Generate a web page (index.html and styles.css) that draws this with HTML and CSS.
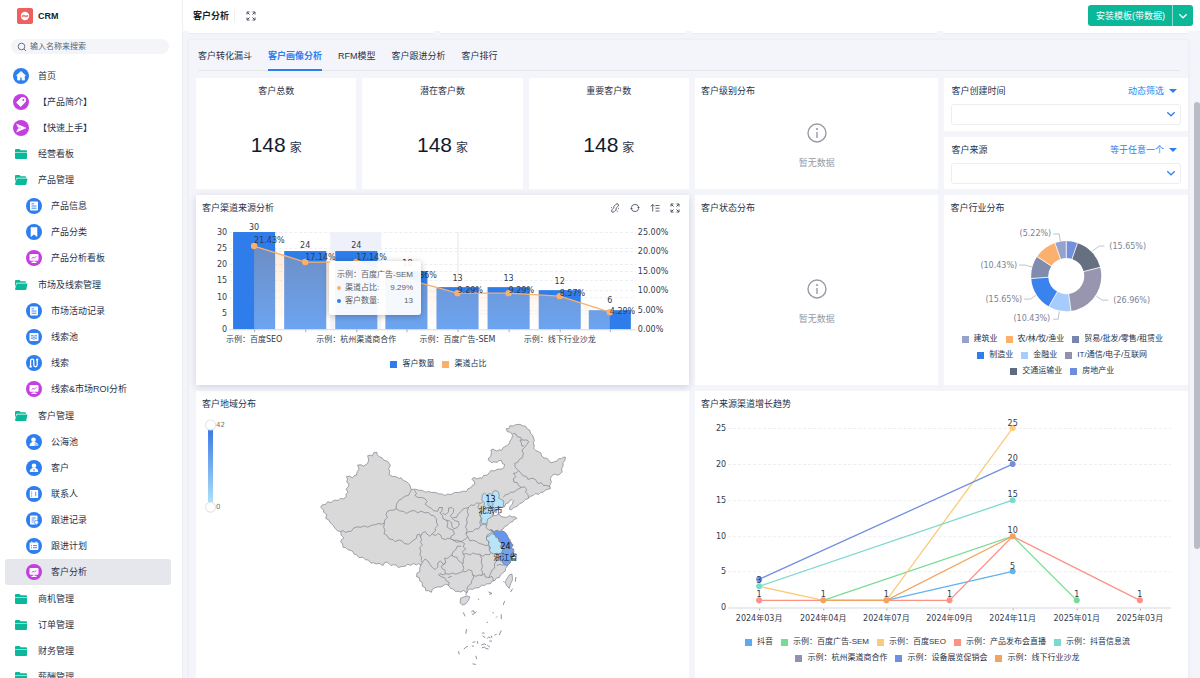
FILE: index.html
```html
<!DOCTYPE html>
<html lang="zh-CN">
<head>
    <meta charset="UTF-8">
    <meta name="viewport" content="width=device-width, initial-scale=1.0">
    <title>CRM - 客户分析</title>
    <link rel="stylesheet" href="styles.css">
</head>
<body>

    <!-- Icon sprite -->
    <svg class="sprite" aria-hidden="true">
        <symbol id="i-home" viewBox="0 0 16 16"><path d="M8 3.400 3.400 7.600h1.100v4.500h2.500V9.200h2v2.900h2.500V7.600h1.100z" fill="#fff" stroke="#fff" stroke-width=".6" stroke-linejoin="round"/></symbol>
        <symbol id="i-tag" viewBox="0 0 16 16"><path d="M8.300 3.800h3.400l.7.7v3.300l-4.700 4.600-4.100-4z" fill="#fff" stroke="#fff" stroke-linejoin="round"/><circle cx="10.300" cy="6" r="1" fill="#c43fe0"/></symbol>
        <symbol id="i-send" viewBox="0 0 16 16"><path d="M3.600 4 13 8l-9.400 4 1.500-3.300L9 8 5.100 7.300z" fill="#fff" stroke="#fff" stroke-width=".5" stroke-linejoin="round"/></symbol>
        <symbol id="i-folder" viewBox="0 0 16 16"><path d="M2 4q0-1 1-1h3.500l1.200 1.200H13q1 0 1 1v1H2z"/><path d="M2 6.800h12V12q0 1-1 1H3q-1 0-1-1z"/></symbol>
        <symbol id="i-folder-open" viewBox="0 0 16 16"><path d="M2 4q0-1 1-1h3.500l1.200 1.200H12q1 0 1 1v.6H3.500L2 10z"/><path d="M3.800 6.500H14.500L13.400 12q-.2 1-1 1H3q-1 0-1-1z"/></symbol>
        <symbol id="i-doc" viewBox="0 0 16 16"><rect x="4" y="3.500" width="8" height="9" rx="1" fill="#fff"/><path d="M5.500 5.800h2.500M5.500 8h5M5.500 10.200h5" stroke="#2d7ff0" stroke-width=".9"/></symbol>
        <symbol id="i-mark" viewBox="0 0 16 16"><path d="M5 3.500h6v9L8 10.200l-3 2.300z" fill="#fff" stroke="#fff" stroke-width=".6" stroke-linejoin="round"/></symbol>
        <symbol id="i-board" viewBox="0 0 16 16"><rect x="3.500" y="4" width="9" height="6.800" rx="1" fill="#fff"/><path d="M5.500 12.300h5M8 10.500v2" stroke="#fff" stroke-width="1.200"/><path d="M5.600 8.600 7.200 7.300l1.200.9 2-2" fill="none" stroke="#c43fe0" stroke-width=".9"/></symbol>
        <symbol id="i-pool" viewBox="0 0 16 16"><rect x="3.500" y="4" width="9" height="8" rx="1" fill="#fff"/><path d="M5 6.700q1-1 2 0t2 0 2 0M5 8.300q1-1 2 0t2 0 2 0M5 9.900q1-1 2 0t2 0 2 0" fill="none" stroke="#2d7ff0" stroke-width=".7"/></symbol>
        <symbol id="i-line" viewBox="0 0 16 16"><path d="M4.600 12V6q0-1.800 1.600-1.800T7.800 6v4q0 1.800 1.700 1.800T11.200 10V4.500" fill="none" stroke="#fff" stroke-width="1.300"/><circle cx="4.600" cy="11.600" r="1.200" fill="#fff"/><circle cx="11.200" cy="4.600" r="1.200" fill="#fff"/></symbol>
        <symbol id="i-user" viewBox="0 0 16 16"><circle cx="8" cy="5.700" r="2.300" fill="#fff"/><path d="M3.800 12q0-3.500 3-3.900h2.400q3 .4 3 3.900z" fill="#fff"/><path d="M8 9v2.500" stroke="#2d7ff0" stroke-width=".9"/></symbol>
        <symbol id="i-sea" viewBox="0 0 16 16"><circle cx="7.500" cy="5.700" r="2.300" fill="#fff"/><path d="M3.600 12q0-3.500 3-3.900h2q3.500.4 3.800 3.900z" fill="#fff"/><path d="M8.500 10q.8-.8 1.600 0t1.600 0M8.500 11.500q.8-.8 1.600 0t1.600 0" fill="none" stroke="#2d7ff0" stroke-width=".7"/></symbol>
        <symbol id="i-contact" viewBox="0 0 16 16"><rect x="3.800" y="4" width="8.400" height="8" rx=".8" fill="#fff"/><path d="M9.700 5.800v4.400M5 6h1.200M5 8h1.200M5 10h1.200" stroke="#2d7ff0" stroke-width=".8"/></symbol>
        <symbol id="i-record" viewBox="0 0 16 16"><rect x="4" y="3.600" width="7.500" height="8.800" rx="1" fill="#fff"/><path d="M5.500 6h4.500M5.500 8h3M5.500 10h2" stroke="#2d7ff0" stroke-width=".8"/><circle cx="10.400" cy="10.400" r="2" fill="#fff" stroke="#2d7ff0" stroke-width=".7"/></symbol>
        <symbol id="i-plan" viewBox="0 0 16 16"><rect x="3.600" y="4.400" width="8.800" height="7.600" rx="1" fill="#fff"/><path d="M5.800 3.500v2M10.200 3.500v2" stroke="#fff"/><path d="M5 7.600h1M7 7.600h4M5 9.700h1M7 9.700h4" stroke="#2d7ff0" stroke-width=".9"/></symbol>
        <symbol id="i-expand" viewBox="0 0 10 10"><path d="M1 3.500V1h2.500M6.500 1H9v2.500M9 6.500V9H6.500M3.500 9H1V6.500M1.200 1.200l2.300 2.300M8.800 1.200 6.500 3.500M8.800 8.800 6.500 6.500M1.200 8.800l2.300-2.300" fill="none" stroke="currentColor"/></symbol>
        <symbol id="i-chevron" viewBox="0 0 10 10"><path d="M1.300 3.300 5 6.800l3.700-3.500" fill="none" stroke="currentColor" stroke-width="1.200"/></symbol>
        <symbol id="i-info" viewBox="0 0 20 20"><circle cx="10" cy="10" r="9" fill="none" stroke="currentColor" stroke-width="1.400"/><path d="M10 9v6" stroke="currentColor" stroke-width="1.400"/><circle cx="10" cy="6" r="1.100" fill="currentColor"/></symbol>
    </svg>

    <!-- Sidebar -->
    <aside class="sidebar">
        <div class="brand">
            <svg class="brand-logo" viewBox="0 0 16 16" aria-hidden="true">
                <rect width="16" height="16" rx="2" fill="#ee5f5f"/>
                <circle cx="8" cy="8" r="4.200" fill="#fff"/>
                <path d="M5 8.600q1.500-1.600 3-.6t3-.6" fill="none" stroke="#f0807c" stroke-width="1.600"/>
            </svg>
            <span>CRM</span>
        </div>
        <label class="search">
            <svg viewBox="0 0 10 10" aria-hidden="true"><circle cx="4.500" cy="4.500" r="3.300" fill="none" stroke="#596175" stroke-width=".9"/><path d="m7 7 2 2" stroke="#596175" stroke-width=".9"/></svg>
            <input type="text" placeholder="输入名称来搜索" aria-label="搜索">
        </label>
        <nav>
            <ul class="menu">
                <li><a href="#"><svg class="icon blue"><use href="#i-home"/></svg>首页</a></li>
                <li><a href="#"><svg class="icon purple"><use href="#i-tag"/></svg>【产品简介】</a></li>
                <li><a href="#"><svg class="icon purple"><use href="#i-send"/></svg>【快速上手】</a></li>
                <li><a href="#"><svg class="icon folder"><use href="#i-folder"/></svg>经营看板</a></li>
                <li>
                    <a href="#"><svg class="icon folder"><use href="#i-folder-open"/></svg>产品管理</a>
                    <ul class="submenu">
                        <li><a href="#"><svg class="icon blue"><use href="#i-doc"/></svg>产品信息</a></li>
                        <li><a href="#"><svg class="icon blue"><use href="#i-mark"/></svg>产品分类</a></li>
                        <li><a href="#"><svg class="icon purple"><use href="#i-board"/></svg>产品分析看板</a></li>
                    </ul>
                </li>
                <li>
                    <a href="#"><svg class="icon folder"><use href="#i-folder-open"/></svg>市场及线索管理</a>
                    <ul class="submenu">
                        <li><a href="#"><svg class="icon blue"><use href="#i-doc"/></svg>市场活动记录</a></li>
                        <li><a href="#"><svg class="icon blue"><use href="#i-pool"/></svg>线索池</a></li>
                        <li><a href="#"><svg class="icon blue"><use href="#i-line"/></svg>线索</a></li>
                        <li><a href="#"><svg class="icon purple"><use href="#i-board"/></svg>线索&amp;市场ROI分析</a></li>
                    </ul>
                </li>
                <li>
                    <a href="#"><svg class="icon folder"><use href="#i-folder-open"/></svg>客户管理</a>
                    <ul class="submenu">
                        <li><a href="#"><svg class="icon blue"><use href="#i-sea"/></svg>公海池</a></li>
                        <li><a href="#"><svg class="icon blue"><use href="#i-user"/></svg>客户</a></li>
                        <li><a href="#"><svg class="icon blue"><use href="#i-contact"/></svg>联系人</a></li>
                        <li><a href="#"><svg class="icon blue"><use href="#i-record"/></svg>跟进记录</a></li>
                        <li><a href="#"><svg class="icon blue"><use href="#i-plan"/></svg>跟进计划</a></li>
                        <li><a href="#" class="active"><svg class="icon purple"><use href="#i-board"/></svg>客户分析</a></li>
                    </ul>
                </li>
                <li><a href="#"><svg class="icon folder"><use href="#i-folder"/></svg>商机管理</a></li>
                <li><a href="#"><svg class="icon folder"><use href="#i-folder"/></svg>订单管理</a></li>
                <li><a href="#"><svg class="icon folder"><use href="#i-folder"/></svg>财务管理</a></li>
                <li><a href="#"><svg class="icon folder"><use href="#i-folder"/></svg>薪酬管理</a></li>
            </ul>
        </nav>
    </aside>

    <div class="main">
        <!-- Top bar -->
        <header class="topbar">
            <h1>客户分析</h1>
            <button class="icon-btn" aria-label="全屏"><svg><use href="#i-expand"/></svg></button>
            <div class="install">
                <button>安装模板(带数据)</button>
                <button class="install-more" aria-label="更多"><svg><use href="#i-chevron"/></svg></button>
            </div>
        </header>

        <div class="content">
            <!-- Bottom edge of the row above -->
            <div class="prev-row"><i></i><i></i><i></i><i></i></div>

            <section class="panel">
                <nav class="tabs">
                    <a href="#">客户转化漏斗</a>
                    <a href="#" class="active">客户画像分析</a>
                    <a href="#">RFM模型</a>
                    <a href="#">客户跟进分析</a>
                    <a href="#">客户排行</a>
                </nav>

                <div class="grid">
                    <!-- Totals -->
                    <div class="card stat"><h2>客户总数</h2><p><b>148</b>家</p></div>
                    <div class="card stat"><h2>潜在客户数</h2><p><b>148</b>家</p></div>
                    <div class="card stat"><h2>重要客户数</h2><p><b>148</b>家</p></div>

                    <div class="card quarter">
                        <h2>客户级别分布</h2>
                        <div class="empty"><svg><use href="#i-info"/></svg><span>暂无数据</span></div>
                    </div>

                    <!-- Filters -->
                    <div class="filters">
                        <div class="card filter">
                            <div class="filter-head"><label for="created">客户创建时间</label><button>动态筛选<i></i></button></div>
                            <div class="select-box"><select id="created"><option></option></select><svg><use href="#i-chevron"/></svg></div>
                        </div>
                        <div class="card filter">
                            <div class="filter-head"><label for="source">客户来源</label><button>等于任意一个<i></i></button></div>
                            <div class="select-box"><select id="source"><option></option></select><svg><use href="#i-chevron"/></svg></div>
                        </div>
                    </div>

                    <!-- Channel source chart -->
                    <div class="card half hovered">
                        <div class="card-head">
                            <h2>客户渠道来源分析</h2>
                            <div class="tools">
                                <button class="icon-btn" aria-label="联动"><svg viewBox="0 0 10 10"><path d="M3.600 5.200 2 6.800Q.9 8.200 2 9q1 .8 2-.2l1.800-1.800q.9-1 .2-2M6.400 4.800 8 3.200Q9.100 1.800 8 1 7 .2 6 1.200L4.200 3q-.9 1-.2 2" fill="none" stroke="currentColor" stroke-width=".9"/><path d="m2 4.800-1-.3M8 5.200l1 .3M6.800 7.500l.6 1.200" stroke="currentColor" stroke-width=".8"/></svg></button>
                                <button class="icon-btn" aria-label="刷新"><svg viewBox="0 0 10 10"><path d="M1.300 4.500A3.800 3.800 0 0 1 8.700 4.200M8.700 5.500A3.800 3.800 0 0 1 1.300 5.800" fill="none" stroke="currentColor" stroke-width=".9"/><path d="M7.200 4h2.600L8.500 5.700zM.2 6h2.600L1.500 4.300z" fill="currentColor"/></svg></button>
                                <button class="icon-btn" aria-label="排序"><svg viewBox="0 0 10 10"><path d="M2.700 8.500v-7M.8 3.400l1.900-2 1.900 2M5.500 2.500H9.500M5.500 5.200H9.500M5.500 8H9.500" fill="none" stroke="currentColor" stroke-width=".9"/></svg></button>
                                <button class="icon-btn" aria-label="放大"><svg><use href="#i-expand"/></svg></button>
                            </div>
                        </div>
                        <svg class="chart" viewBox="0 0 492 135" preserveAspectRatio="xMinYMin">
                            <defs>
                                <linearGradient id="area" x1="0" y1="0" x2="0" y2="1">
                                    <stop offset="0" stop-color="#ffb46c" stop-opacity=".3"/>
                                    <stop offset="1" stop-color="#ffffff" stop-opacity=".3"/>
                                </linearGradient>
                            </defs>
                            <g transform="translate(33 11)">
                                <path class="grid-line" d="M0 .5H406M0 16.500H406M0 32.500H406M0 48.500H406M0 65.500H406M0 81.500H406M0 19.500H406M0 39.500H406M0 58.500H406M0 78.500H406"/>
                                <rect x="101" width="51" height="97" fill="#eef1f9"/>
                                <path d="M228.500 0v97" stroke="#e3e5ea"/>
                                <g fill="#2e7dea">
                                    <rect x="4" y="0" width="42" height="97"/>
                                    <rect x="55" y="19" width="42" height="78"/>
                                    <rect x="106" y="19" width="42" height="78"/>
                                    <rect x="156" y="39" width="42" height="58"/>
                                    <rect x="207" y="55" width="42" height="42"/>
                                    <rect x="258" y="55" width="42" height="42"/>
                                    <rect x="309" y="58" width="42" height="39"/>
                                    <rect x="359" y="78" width="42" height="19"/>
                                </g>
                                <path d="M25 14 76 30h51l50 17 51 14h51l51 3 50 16v17H25z" fill="url(#area)"/>
                                <path d="M0 97.500H406" stroke="#d5d8de"/>
                                <path d="M25.500 97v3M76.500 97v3M127.500 97v3M177.500 97v3M228.500 97v3M279.500 97v3M330.500 97v3M380.500 97v3" stroke="#a9aeb9"/>
                                <path d="M25 14 76 30h51l50 17 51 14h51l51 3 50 16" fill="none" stroke="#fbb06a" stroke-width="1.400"/>
                                <g fill="#fbb06a">
                                    <circle cx="25" cy="14" r="3.200"/><circle cx="76" cy="30" r="3.200"/><circle cx="127" cy="30" r="3.200"/><circle cx="177" cy="47" r="3.200"/>
                                    <circle cx="228" cy="61" r="3.200"/><circle cx="279" cy="61" r="3.200"/><circle cx="330" cy="64" r="3.200"/><circle cx="380" cy="80" r="3.200"/>
                                </g>
                                <g class="mid">
                                    <text x="25" y="-2">30</text><text x="76" y="16">24</text><text x="127" y="16">24</text><text x="178" y="34">18</text>
                                    <text x="228" y="49">13</text><text x="279" y="49">13</text><text x="330" y="52">12</text><text x="380" y="71">6</text>
                                    <text x="25" y="110">示例：百度SEO</text><text x="127" y="110">示例：杭州渠道商合作</text>
                                    <text x="228" y="110">示例：百度广告-SEM</text><text x="330" y="110">示例：线下行业沙龙</text>
                                </g>
                                <text x="25" y="11">21.43%</text><text x="76" y="28">17.14%</text><text x="127" y="28">17.14%</text><text x="177" y="46">12.86%</text>
                                <text x="228" y="61">9.29%</text><text x="279" y="61">9.29%</text><text x="330" y="64">8.57%</text><text x="380" y="82">4.29%</text>
                                <g class="end">
                                    <text x="-2" y="3">30</text><text x="-2" y="19">25</text><text x="-2" y="35">20</text><text x="-2" y="51">15</text>
                                    <text x="-2" y="68">10</text><text x="-2" y="84">5</text><text x="-2" y="100">0</text>
                                </g>
                                <text x="408" y="3">25.00%</text><text x="408" y="22">20.00%</text><text x="408" y="42">15.00%</text>
                                <text x="408" y="61">10.00%</text><text x="408" y="81">5.00%</text><text x="408" y="100">0.00%</text>
                            </g>
                        </svg>
                        <div class="legend">
                            <div><span><i class="c-bar"></i>客户数量</span><span><i class="c-rate"></i>渠道占比</span></div>
                        </div>
                        <div class="tooltip">
                            <div>示例：百度广告-SEM</div>
                            <dl><dt><i class="c-rate"></i>渠道占比:</dt><dd>9.29%</dd></dl>
                            <dl><dt><i class="c-bar"></i>客户数量:</dt><dd>13</dd></dl>
                        </div>
                    </div>

                    <div class="card quarter">
                        <h2>客户状态分布</h2>
                        <div class="empty"><svg><use href="#i-info"/></svg><span>暂无数据</span></div>
                    </div>

                    <!-- Industry pie -->
                    <div class="card quarter">
                        <h2>客户行业分布</h2>
                        <svg class="chart muted" viewBox="0 0 243 110" preserveAspectRatio="xMidYMin">
                            <g transform="translate(122 55)">
                                <g class="ring" transform="rotate(-90)">
                                    <circle r="26.500" pathLength="100" stroke="#7191df" stroke-dasharray="5.220 94.780"/>
                                    <circle r="26.500" pathLength="100" stroke="#667080" stroke-dasharray="15.650 84.350" stroke-dashoffset="-5.220"/>
                                    <circle r="26.500" pathLength="100" stroke="#9896ae" stroke-dasharray="26.960 73.040" stroke-dashoffset="-20.870"/>
                                    <circle r="26.500" pathLength="100" stroke="#a6cbfc" stroke-dasharray="10.430 89.570" stroke-dashoffset="-47.830"/>
                                    <circle r="26.500" pathLength="100" stroke="#3a82ec" stroke-dasharray="15.650 84.350" stroke-dashoffset="-58.260"/>
                                    <circle r="26.500" pathLength="100" stroke="#7f8cae" stroke-dasharray="10.430 89.570" stroke-dashoffset="-73.910"/>
                                    <circle r="26.500" pathLength="100" stroke="#fbb06d" stroke-dasharray="10.430 89.570" stroke-dashoffset="-84.340"/>
                                    <circle r="26.500" pathLength="100" stroke="#95a2cc" stroke-dasharray="5.220 94.780" stroke-dashoffset="-94.770"/>
                                </g>
                                <path d="M0-36v20M11.600-34 5-15M34.900-9 15-4M4.900 35.700 2 15M-17.900 31.300-8 14M-36 2.500-16 1M-30-20-13-9M-11.600-34-5-15" stroke="#fff" stroke-width=".8"/>
                                <path d="M-6-35-7-42h-6M26-25l7-5h5M30 20l6 4h6M-7 35-8 43h-5M-30 19l-6 4h-6M-34-9l-7-2h-6" fill="none" stroke="#a3a9b6" stroke-width=".7"/>
                                <g class="end"><text x="-15" y="-40">(5.22%)</text><text x="-49" y="-8">(10.43%)</text><text x="-44" y="26">(15.65%)</text><text x="-16" y="45">(10.43%)</text></g>
                                <text x="43" y="-27">(15.65%)</text><text x="47" y="27">(26.96%)</text>
                            </g>
                        </svg>
                        <div class="legend">
                            <div><span><i class="p-build"></i>建筑业</span><span><i class="p-farm"></i>农/林/牧/渔业</span><span><i class="p-trade"></i>贸易/批发/零售/租赁业</span></div>
                            <div><span><i class="c-bar"></i>制造业</span><span><i class="p-bank"></i>金融业</span><span><i class="p-it"></i>IT/通信/电子/互联网</span></div>
                            <div><span><i class="p-traffic"></i>交通运输业</span><span><i class="p-house"></i>房地产业</span></div>
                        </div>
                    </div>

                    <!-- Region map -->
                    <div class="card half">
                        <h2>客户地域分布</h2>
                        <svg class="chart" viewBox="0 0 492 290" preserveAspectRatio="xMinYMin">
                            <defs>
                                <linearGradient id="range" x1="0" y1="0" x2="0" y2="1"><stop offset="0" stop-color="#3474e6"/><stop offset="1" stop-color="#b4e6f8"/></linearGradient>
                            </defs>
                            <rect x="12" y="8" width="5" height="82" fill="url(#range)"/>
                            <g fill="#fff" stroke="#dfe3ea"><circle cx="14.500" cy="8" r="5"/><circle cx="14.500" cy="90" r="5"/></g>
                            <g class="range-text"><text x="20" y="10">42</text><text x="20" y="92">0</text></g>
                            <g transform="translate(114 -7) scale(.3333)" stroke="#777b8a" stroke-width="2" stroke-linejoin="round">
                                <path fill="#d9d9d9" d="M31 291 36 284 46 283 52 275 62 277 72 270 84 271 90 265 100 266 108 260 107 252 113 246 107 237 114 230 116 222 109 216 112 207 108 200 118 198 126 203 134 195 138 196 141 184 146 177 142 165 152 164 160 168 172 160 175 150 172 137 180 135 186 138 190 128 200 127 200 134 207 140 215 143 220 150 232 154 240 166 235 175 238 184 236 193 246 199 256 199 266 205 272 203 280 212 288 214 298 224 302 238 314 237 325 240 336 241 345 246 354 244 364 247 376 247 384 251 396 252 402 256 412 252 422 253 432 247 446 247 458 243 468 244 472 236 482 232 486 225 493 222 491 213 484 208 489 202 500 206 509 203 514 205 519 196 530 195 536 188 540 182 552 182 562 177 574 177 580 172 582 163 576 161 572 151 564 152 560 157 550 155 544 158 533 150 534 144 540 140 543 128 541 120 547 117 558 123 566 119 573 121 578 112 588 107 596 101 598 93 603 86 606 76 600 67 590 65 587 56 595 56 598 47 608 48 615 44 628 43 636 47 645 49 650 57 657 60 660 70 667 78 671 92 668 98 671 108 669 114 676 122 684 125 690 128 693 137 700 144 708 144 714 150 720 158 728 156 738 153 744 146 752 146 756 142 764 141 763 150 757 158 757 168 753 174 754 186 748 192 742 195 730 192 722 199 719 206 722 216 717 226 719 236 712 237 704 240 698 246 690 247 684 253 674 250 668 256 658 259 652 266 644 268 636 277 628 280 620 288 610 292 602 299 596 297 599 288 605 282 608 272 604 268 597 272 594 278 586 280 582 290 574 292 568 290 562 298 554 300 548 309 548 316 556 316 566 311 570 318 580 321 590 321 596 316 604 320 614 320 619 325 610 328 607 334 598 337 590 346 582 349 578 356 570 360 580 364 586 369 590 380 598 388 600 397 608 405 600 410 594 410 602 415 610 417 606 424 611 430 604 434 605 444 598 448 599 457 592 462 590 468 585 474 584 482 576 488 570 494 566 502 558 503 552 511 544 513 540 520 528 521 522 526 514 524 506 532 494 533 486 537 476 536 472 541 470 547 464 545 460 540 450 545 442 543 434 543 428 536 420 534 414 525 404 521 398 527 390 530 380 530 372 533 365 538 363 546 354 541 346 541 344 532 336 528 335 516 328 512 326 502 318 499 320 488 328 484 328 472 332 464 324 460 318 464 310 460 300 465 292 462 284 468 272 469 264 472 258 465 248 463 242 466 236 460 230 455 222 458 218 466 206 459 198 461 188 457 182 459 174 449 166 449 158 441 146 442 138 433 132 432 126 422 112 418 106 412 98 411 97 400 91 396 94 388 101 383 92 374 92 364 82 362 74 354 68 344 60 338 56 330 46 324 50 314 40 306 40 300z"/>
                                <g fill="none">
                                    <path d="M92 364 98 361 106 367 116 363 122 364 130 354 140 350 152 351 162 347 172 351 184 345 196 343 206 340 214 342 222 338 223 330 231 322 227 312 231 304 240 300 250 300 257 296 258 282 266 270 274 266 284 258 294 256 299 246 303 238"/>
                                    <path d="M222 338 220 352 224 360 221 370 230 376 236 386 248 388 254 394 266 389 276 393 282 400 294 402 302 396 310 390 318 384 320 374 328 372 330 380"/>
                                    <path d="M257 296 268 302 280 304 288 310 300 303 312 301 322 308 332 303 344 308 354 307 360 314 370 317 378 326 378 336 382 346 374 354 375 362 366 370 358 378 350 372 344 364 336 368 330 380 334 388 330 396 336 404 328 412 331 424 328 434 334 440 332 450 336 456 330 466"/>
                                    <path d="M312 240 318 250 314 256 322 262 334 262 344 266 350 274 344 282 354 290 362 294 370 302 382 303 386 292 396 292 394 304 388 308 396 316 398 326 408 330 412 340 409 350 418 356 428 360 432 372 422 378 420 386"/>
                                    <path d="M366 372 376 376 382 370 390 374 394 384 404 388 412 384 420 386 430 390 440 390 452 394"/>
                                    <path d="M396 310 406 313 414 305 414 294 424 292 430 298 428 308 420 316 426 326 434 332 444 334 446 344 440 352 430 356 424 348 424 338 416 332 408 330"/>
                                    <path d="M428 322 438 322 442 312 452 304 458 296 466 294 474 292 470 304 474 314 468 326 470 338 465 350 470 360 466 372 472 380 462 388 452 394 438 396 426 388"/>
                                    <path d="M474 292 482 284 490 286 498 278 510 280 518 274M506 282 502 292 510 302 507 314 512 324 508 336 510 346 504 356 494 356 486 364 476 364 467 370"/>
                                    <path d="M510 346 520 342 528 344M530 340 526 352 536 360 546 360M546 362 538 370 530 374 528 384 534 394 536 404 526 406 516 402 506 400 498 394 486 390 478 392 472 380"/>
                                    <path d="M452 394 462 400 458 410 466 416 456 424 458 432 468 430 478 434 488 428 498 432 508 432 516 438 526 432 536 434 542 426 536 416 536 404"/>
                                    <path d="M452 408 440 408 436 418 428 424 424 434 430 440 438 440 442 448 450 456 458 460 458 448 462 438 458 432"/>
                                    <path d="M336 456 344 446 352 452 358 462 366 472 374 478 382 470 382 458 390 452 398 462 406 456 402 444 412 444 420 436 426 436"/>
                                    <path d="M406 458 398 464 392 468 396 476 404 480 404 490 400 494 388 490 384 494 394 500 402 502 408 512 416 516 414 526"/>
                                    <path d="M404 490 416 492 426 488 436 492 446 488 456 484 460 474 456 462M412 502 424 498M458 484 466 484 474 478 484 482 486 492 490 500 484 510 482 520 472 528 468 540"/>
                                    <path d="M486 494 496 498 506 494 514 496 516 486 512 478 516 468 512 456 514 446 508 434M516 494 522 490 524 500 536 502 544 498 550 512M536 500 540 490 544 480 552 474 552 460 558 452 554 444 558 436M558 466 568 462 578 466"/>
                                    <path d="M578 262 584 254 594 252 600 246 610 246 620 238 632 232 642 230 648 238 645 246 652 254 654 264"/>
                                    <path d="M632 232 624 226 620 218 610 216 608 206 616 200 608 190 618 188 624 182 614 172 612 160 622 156 626 148 636 142 638 130 634 120 642 112 648 104 654 96 650 90 640 90 628 90 632 98 634 108 640 108M634 90 630 82 620 80 616 72 606 70"/>
                                    <path d="M624 182 632 190 636 196 648 200 652 208 664 204 674 208 682 220 692 218 698 226 708 226 718 230"/>
                                </g>
                                <path fill="#b9e4f8" d="M515 254 522 249 528 254 538 250 544 254 548 244 556 241 564 246 566 256 564 264 572 268 580 272 578 282 580 288 572 292 568 290 562 298 554 300 548 309 546 318 536 324 530 328 530 338 522 341 512 338 514 326 510 318 513 308 522 300 530 294 520 288 522 278 514 270z"/>
                                <path fill="#9dd6f4" d="M532 276 542 274 548 280 546 290 554 296 550 306 542 300 542 290 532 286z"/>
                                <path fill="#b9e4f8" d="M542 370 538 376 528 380 528 390 536 394 534 404 540 412 536 420 542 428 552 432 566 432 574 428 578 416 568 410 574 400 566 394 564 384 556 382 554 374z"/>
                                <path fill="#6596f1" d="M540 358 550 364 560 360 568 364 580 364 590 374 594 386 600 394 606 404 604 412 590 414 580 410 572 412 574 400 566 394 564 384 554 376z"/>
                                <path fill="#70a4f2" d="M578 416 590 413 602 415 610 418 606 426 612 432 604 440 600 450 599 458 590 466 580 464 574 454 568 446 570 434z"/>
                                <path fill="#d9d9d9" d="M450 564 460 560 470 557 478 560 474 570 466 580 456 584 449 578zM468 544 466 556M604 491 596 494 588 506 584 516 588 526 596 534 600 520 606 508z"/>
                                <path fill="none" stroke-width="2.500" d="M616 500l-2 14M606 535l-6 10M582 572l-4 12M458 606l6 12M572 612v14M468 656l-2 14M572 660l-6 14M444 722l2 10M496 736l2 10M486 760l10 2M482 606l6-6 4 8 6-4M484 612l8-2M530 634v4M534 545l10 4M536 552l8-2M514 668l8 0M516 676l8 6M530 684l4-4 6 2M536 692l8 0M552 674l6-2M486 696l8-2M484 706l6 2M500 692l2 8M512 704l10-4 4 4M514 712l8-2 4 4 8 2M530 704l8 6M460 716l6-6 6-2M546 606l4 2M556 622l4-4M502 566l4 2M542 676l2 6M604 428l8-4M612 436l6 4M578 514l4 2"/>
                            </g>
                            <g class="mid map-text"><text x="294" y="85">13</text><text x="294" y="96">北京市</text><text x="309" y="132">24</text><text x="309" y="143">浙江省</text></g>
                        </svg>
                    </div>

                    <!-- Trend chart -->
                    <div class="card half">
                        <h2>客户来源渠道增长趋势</h2>
                        <svg class="chart" viewBox="0 0 492 217" preserveAspectRatio="xMinYMin">
                            <g transform="translate(33 11)">
                                <path class="grid-line" d="M0 .5H442M0 36.500H442M0 72.500H442M0 108.500H442M0 143.500H442"/>
                                <path d="M0 179.500H442" stroke="#d5d8de"/>
                                <path d="M31.500 180v2M95.500 180v2M158.500 180v2M221.500 180v2M284.500 180v2M348.500 180v2M411.500 180v2" stroke="#a9aeb9"/>
                                <g fill="none" stroke-width="1.300">
                                    <path stroke="#62b2f0" d="M158 172 284 143"/>
                                    <path stroke="#76dc94" d="M95 172 284 108l64 64"/>
                                    <path stroke="#facb79" d="M31 158l64 14h63L284 0"/>
                                    <path stroke="#fc9186" d="M31 172h190l63-64 127 64"/>
                                    <path stroke="#7cd9d0" d="M31 158 284 72"/>
                                    <path stroke="#718fe0" d="M31 151 284 36"/>
                                    <path stroke="#f1a35f" d="M95 172h63l126-64"/>
                                </g>
                                <circle cx="284" cy="143" r="3" fill="#62b2f0"/>
                                <circle cx="348" cy="172" r="3" fill="#76dc94"/>
                                <circle cx="284" cy="0" r="3" fill="#facb79"/>
                                <g fill="#fc9186"><circle cx="31" cy="172" r="3"/><circle cx="221" cy="172" r="3"/><circle cx="411" cy="172" r="3"/></g>
                                <g fill="#718fe0"><circle cx="31" cy="151" r="3"/><circle cx="284" cy="36" r="3"/></g>
                                <g fill="#7cd9d0"><circle cx="31" cy="158" r="3"/><circle cx="284" cy="72" r="3"/></g>
                                <g fill="#f1a35f"><circle cx="95" cy="172" r="3"/><circle cx="158" cy="172" r="3"/><circle cx="284" cy="108" r="3"/></g>
                                <g class="mid">
                                    <text x="31" y="155">3</text><text x="31" y="169">1</text><text x="95" y="169">1</text><text x="158" y="169">1</text><text x="221" y="169">1</text>
                                    <text x="284" y="-2">25</text><text x="284" y="33">20</text><text x="284" y="69">15</text><text x="284" y="105">10</text><text x="284" y="141">5</text>
                                    <text x="348" y="169">1</text><text x="411" y="169">1</text>
                                    <text x="31" y="193">2024年03月</text><text x="95" y="193">2024年04月</text><text x="158" y="193">2024年07月</text><text x="221" y="193">2024年09月</text>
                                    <text x="284" y="193">2024年11月</text><text x="348" y="193">2025年01月</text><text x="411" y="193">2025年03月</text>
                                </g>
                                <g class="end"><text x="-2" y="3">25</text><text x="-2" y="39">20</text><text x="-2" y="75">15</text><text x="-2" y="111">10</text><text x="-2" y="146">5</text><text x="-2" y="182">0</text></g>
                            </g>
                        </svg>
                        <div class="legend">
                            <div><span><i class="t-douyin"></i>抖音</span><span><i class="t-sem"></i>示例：百度广告-SEM</span><span><i class="t-seo"></i>示例：百度SEO</span><span><i class="t-live"></i>示例：产品发布会直播</span><span><i class="t-feed"></i>示例：抖音信息流</span></div>
                            <div><span><i class="p-it"></i>示例：杭州渠道商合作</span><span><i class="t-expo"></i>示例：设备展览促销会</span><span><i class="t-salon"></i>示例：线下行业沙龙</span></div>
                        </div>
                    </div>
                </div>
            </section>
            <div class="scroll-thumb"></div>
        </div>
    </div>

</body>
</html>
```
FILE: styles.css
```css
* {
    margin: 0;
    padding: 0;
    box-sizing: border-box;
}

body {
    display: flex;
    height: 100vh;
    overflow: hidden;
    font: 9px/12px "Liberation Sans", "Noto Sans CJK SC", sans-serif;
    color: #27334a;
    background: #f4f5fa;
}

ul {
    list-style: none;
}

a {
    color: inherit;
    text-decoration: none;
}

button,
input,
select {
    font: inherit;
    color: inherit;
    border: 0;
    background: none;
}

button {
    cursor: pointer;
}

.sprite {
    display: none;
}

/* Sidebar */
.sidebar {
    flex: 0 0 183px;
    background: #fff;
    border-right: 1px solid #eceef3;
    overflow: hidden;
}

.brand {
    display: flex;
    align-items: center;
    gap: 5px;
    height: 32px;
    padding-left: 17px;
    font-weight: bold;
    color: #141e31;
}

.brand-logo {
    width: 16px;
    height: 16px;
}

.search {
    display: flex;
    align-items: center;
    gap: 3px;
    height: 15px;
    margin: 7px 13px 9px 11px;
    padding-left: 6px;
    border-radius: 8px;
    background: #f3f5f8;
}

.search svg {
    width: 10px;
    height: 10px;
}

.search input {
    flex: 1;
    min-width: 0;
    font-size: 8px;
    outline: none;
}

.search input::placeholder {
    color: #596175;
}

.menu a {
    display: flex;
    align-items: center;
    gap: 9px;
    height: 26px;
    margin: 0 11px 0 5px;
    padding-left: 8px;
    border-radius: 3px;
}

.submenu {
    padding-bottom: 1px;
}

.submenu a {
    padding-left: 21px;
}

.menu a.active {
    background: #e6e7ed;
}

.icon {
    width: 16px;
    height: 16px;
    border-radius: 50%;
}

.blue {
    background: #2d7ff0;
}

.purple {
    background: #c43fe0;
}

.folder {
    border-radius: 0;
    fill: #0bb89a;
}

/* Top bar */
.main {
    flex: 1;
    min-width: 0;
    display: flex;
    flex-direction: column;
}

.topbar {
    display: flex;
    align-items: center;
    height: 31px;
    padding: 0 7px 0 10px;
    background: #fff;
}

.topbar h1 {
    padding-right: 5px;
    margin-right: 11px;
    border-right: 1px solid #edeff3;
    font-size: 9px;
    color: #141e31;
}

.icon-btn {
    display: flex;
    color: #4b5366;
}

.icon-btn svg {
    width: 10px;
    height: 10px;
}

.install {
    display: flex;
    height: 21px;
    margin-left: auto;
    border-radius: 3px;
    overflow: hidden;
    color: #fff;
}

.install button {
    padding: 0 7px 0 8px;
    background: #0ab899;
}

.install .install-more {
    display: flex;
    align-items: center;
    padding: 0 5px;
    border-left: 1px solid #8adccd;
}

.install-more svg {
    width: 10px;
    height: 10px;
}

/* Content */
.content {
    position: relative;
    flex: 1;
    min-height: 0;
    padding: 0 12px 0 6px;
    overflow: hidden;
}

.prev-row {
    display: grid;
    grid-template-columns: repeat(4, 1fr);
    gap: 6px;
    height: 2px;
    margin-bottom: 7px;
}

.prev-row i {
    background: #fff;
    box-shadow: 0 1px 2px #e6e7f0;
}

.panel {
    padding-left: 7px;
    box-shadow: 0 0 4px #e6e7f0;
}

.tabs {
    display: flex;
    gap: 16px;
    height: 31px;
    margin: 0 8px 7px 2px;
    border-bottom: 1px solid #e4e6ec;
}

.tabs a {
    height: 31px;
    line-height: 32px;
}

.tabs .active {
    color: #2d7ff0;
    font-weight: bold;
    border-bottom: 2px solid #2d7ff0;
}

.grid {
    display: grid;
    grid-template-columns: repeat(24, 1fr);
    grid-template-rows: 111px 190px auto;
    gap: 6px;
}

.card {
    position: relative;
    display: flex;
    flex-direction: column;
    background: #fff;
}

.card h2 {
    padding: 0 6px;
    font-size: 9px;
    font-weight: normal;
    line-height: 26px;
}

.quarter,
.filters {
    grid-column: span 6;
}

.half {
    grid-column: span 12;
}

.hovered {
    z-index: 1;
    box-shadow: 0 2px 7px #cfd0e0;
}

.card-head,
.tools {
    display: flex;
    align-items: center;
}

.tools {
    gap: 10px;
    margin-left: auto;
    padding-right: 9px;
}

/* Totals */
.stat {
    grid-column: span 4;
    text-align: center;
}

.stat p {
    margin: auto;
    font-size: 12px;
    line-height: 28px;
}

.stat b {
    margin-right: 4px;
    font-size: 21px;
    font-weight: normal;
    color: #111b2e;
}

.empty {
    flex: 1;
    display: flex;
    flex-direction: column;
    align-items: center;
    justify-content: center;
    gap: 14px;
    padding-bottom: 2px;
    color: #989ba7;
}

.empty svg {
    width: 20px;
    height: 20px;
}

/* Filters */
.filters {
    display: flex;
    flex-direction: column;
    gap: 6px;
}

.filter {
    flex: 1;
    padding: 0 7px;
}

.filter-head {
    display: flex;
    align-items: center;
    justify-content: space-between;
    height: 26px;
}

.filter-head button {
    display: flex;
    align-items: center;
    gap: 5px;
    padding-right: 4px;
    color: #2d7ff0;
}

.filter-head i {
    border: 4px solid transparent;
    border-top-color: #2d7ff0;
    border-bottom: 0;
}

.select-box {
    position: relative;
}

.select-box select {
    display: block;
    width: 100%;
    height: 21px;
    border: 1px solid #eceef2;
    border-radius: 3px;
    appearance: none;
}

.select-box svg {
    position: absolute;
    right: 5px;
    top: 5px;
    width: 10px;
    height: 10px;
    color: #2d7ff0;
    pointer-events: none;
}

/* Charts */
.chart {
    display: block;
    width: 100%;
    font: 8px "DejaVu Sans", "Noto Sans CJK SC", sans-serif;
    fill: #333b4e;
}

.muted {
    fill: #7c8292;
}

.mid {
    text-anchor: middle;
}

.end {
    text-anchor: end;
}

.grid-line {
    stroke: #eceef2;
    stroke-dasharray: 3 2;
}

.ring circle {
    fill: none;
    stroke-width: 17px;
}

.range-text {
    font-size: 7px;
    fill: #6b7180;
}

.map-text {
    fill: #111;
}

.legend {
    font-size: 8px;
    line-height: 16px;
    padding-right: 8px;
}

.legend div {
    display: flex;
    justify-content: center;
    gap: 8px;
}

.legend span {
    display: flex;
    align-items: center;
    gap: 5px;
    white-space: nowrap;
}

.legend i {
    width: 7px;
    height: 7px;
}

.tooltip {
    position: absolute;
    left: 133px;
    top: 66px;
    width: 92px;
    padding: 7px 8px 8px;
    border-radius: 3px;
    background: rgba(255, 255, 255, 0.93);
    box-shadow: 0 1px 6px rgba(0, 0, 0, 0.25);
    font-size: 8px;
    line-height: 13px;
    color: #5c5f66;
    white-space: nowrap;
}

.tooltip dl {
    display: flex;
    justify-content: space-between;
}

.tooltip dt {
    display: flex;
    align-items: center;
    gap: 4px;
}

.tooltip i {
    width: 4px;
    height: 4px;
    border-radius: 50%;
}

/* Series colors */
.c-bar { background: #2e7dea; }
.c-rate { background: #fbb06a; }
.p-build { background: #95a2cc; }
.p-farm { background: #fbb06d; }
.p-trade { background: #7886ad; }
.p-bank { background: #a6cbfc; }
.p-it { background: #9392ae; }
.p-traffic { background: #5f6980; }
.p-house { background: #6b8de0; }
.t-douyin { background: #5aabef; }
.t-sem { background: #76dc94; }
.t-seo { background: #facb79; }
.t-live { background: #fc9186; }
.t-feed { background: #7cd9d0; }
.t-expo { background: #718fe0; }
.t-salon { background: #f1a35f; }

.scroll-thumb {
    position: absolute;
    right: 0;
    top: 11%;
    width: 6px;
    height: 69%;
    border-radius: 3px;
    background: #b9bbc6;
}
```
